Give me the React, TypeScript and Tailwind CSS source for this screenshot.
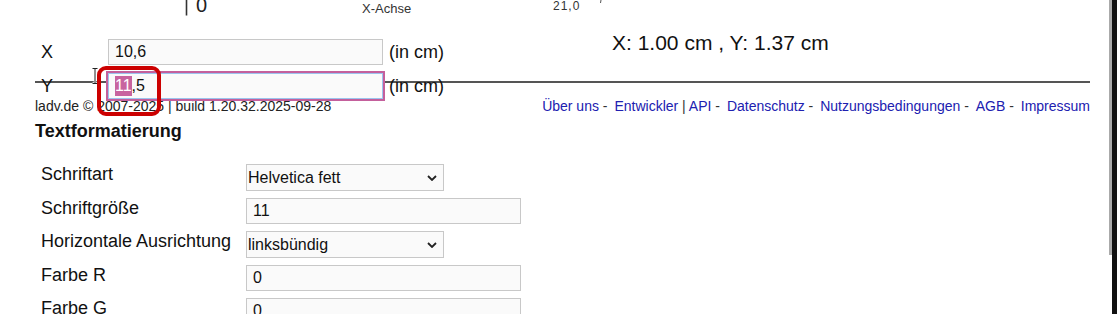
import { ReactNode } from "react";

const font = "font-['Liberation_Sans',Arial,Helvetica,sans-serif]";

function Chevron() {
  return (
    <svg width="10" height="6" viewBox="0 0 10 6" className="pointer-events-none absolute right-[7px] top-1/2 -translate-y-1/2">
      <path d="M1 1 L5 5 L9 1" fill="none" stroke="#222" strokeWidth="1.8" />
    </svg>
  );
}

function SelectBox({ value }: { value: string }) {
  return (
    <div className="relative w-[198px] h-[27px]">
      <select
        defaultValue={value}
        className="w-full h-full appearance-none border border-[#c8c8c8] bg-[#fafafa] pl-px text-[16px] text-[#111] outline-none"
      >
        <option>{value}</option>
      </select>
      <Chevron />
    </div>
  );
}

function TextBox({ value }: { value: string }) {
  return (
    <input
      defaultValue={value}
      className="w-[275px] h-[26px] border border-[#c8c8c8] bg-[#fafafa] px-[6px] text-[16px] text-[#111] outline-none"
    />
  );
}

function Row({ label, children }: { label: string; children: ReactNode }) {
  return (
    <div className="flex items-start mb-[7px]">
      <div className="w-[205px] text-[18px] leading-[21px] text-[#111]">{label}</div>
      {children}
    </div>
  );
}

const links = ["Über uns", "Entwickler", "API", "Datenschutz", "Nutzungsbedingungen", "AGB", "Impressum"];

export default function App() {
  return (
    <div className={`flex h-[314px] w-[1117px] overflow-hidden bg-white ${font}`}>
      <div className="w-[1109px] shrink-0">
        {/* bottom edge of the chart canvas */}
        <svg width="1109" height="33" className="block">
          <line x1="186.5" y1="0" x2="186.5" y2="15.5" stroke="#333" strokeWidth="1.6" />
          <text x="196" y="11.5" fontSize="20" fill="#222" fontFamily="Liberation Sans, Arial, sans-serif">0</text>
          <text x="362" y="12.5" fontSize="13" fill="#333" fontFamily="Liberation Sans, Arial, sans-serif">X-Achse</text>
          <text x="553" y="9.5" fontSize="12" fill="#333" letterSpacing="1" fontFamily="Liberation Sans, Arial, sans-serif">21,0</text>
          <line x1="601" y1="0" x2="600.5" y2="3" stroke="#555" strokeWidth="1" />
        </svg>

        <div className="flex items-start">
          <div className="w-[612px] pl-[41px] pt-[6px]">
            <div className="flex items-center h-[26px] text-[18px] text-[#111]">
              <span className="w-[67px]">X</span>
              <TextBox value="10,6" />
              <span className="ml-[6px]">(in cm)</span>
            </div>
            <div className="relative flex items-center h-[26px] mt-[8px] text-[18px] text-[#111]">
              <span className="w-[67px]">Y</span>
              <div className="relative z-10 flex items-center w-[275px] h-[26px] border border-[#9cc3ee] bg-[#fafafa] px-[6px] text-[16px] outline-2 outline-[#c4609c]">
                <span className="bg-[#c8649f] text-white leading-[20px]">11</span>
                <span>,5</span>
              </div>
              <span className="ml-[6px]">(in cm)</span>
              {/* text cursor */}
              <svg width="6" height="16" viewBox="0 0 6 16" className="absolute left-[51px] top-[-5px] z-20">
                <path d="M0.5 0.5 H5.5 M3 0.5 V15.5 M0.5 15.5 H5.5" fill="none" stroke="#fff" strokeWidth="2.5" />
                <path d="M0.5 0.5 H5.5 M3 0.5 V15.5 M0.5 15.5 H5.5" fill="none" stroke="#222" strokeWidth="1" />
              </svg>
              {/* annotation */}
              <div className="pointer-events-none absolute left-[56px] top-[-7px] z-20 w-[64px] h-[50px] rounded-[9px] border-[4px] border-[#cc0000]" />
            </div>
          </div>
          <div className="-mt-[2px] text-[21px] leading-[24px] text-[#111]">X: 1.00 cm , Y: 1.37 cm</div>
        </div>

        <footer className="ml-[35px] w-[1055px] -mt-[18px] border-t-2 border-[#555]">
          <div className="flex justify-between pt-[15px] text-[14px] leading-[17px]">
            <span className="text-[#222]">ladv.de © 2007-2025 | build 1.20.32.2025-09-28</span>
            <span className="text-[#333] whitespace-pre">
              {links.map((l, i) => (
                <span key={l}>
                  <a className={`text-[#2020b0] ${i > 0 && l !== "API" ? "ml-[3px]" : ""}`}>{l}</a>
                  {i < links.length - 1 ? (l === "Entwickler" ? " | " : " - ") : ""}
                </span>
              ))}
            </span>
          </div>
        </footer>

        <h3 className="ml-[35px] mt-[6px] text-[18px] leading-[21px] font-bold text-[#111]">Textformatierung</h3>

        <div className="ml-[41px] mt-[22px]">
          <Row label="Schriftart">
            <SelectBox value="Helvetica fett" />
          </Row>
          <Row label="Schriftgröße">
            <TextBox value="11" />
          </Row>
          <Row label="Horizontale Ausrichtung">
            <SelectBox value="linksbündig" />
          </Row>
          <Row label="Farbe R">
            <TextBox value="0" />
          </Row>
          <Row label="Farbe G">
            <TextBox value="0" />
          </Row>
        </div>
      </div>

      <div className="flex w-[8px] shrink-0">
        <div className="w-[3px] h-[255px] bg-[#aaa]" />
        <div className="w-[5px] h-full bg-[#111]" />
      </div>
    </div>
  );
}
